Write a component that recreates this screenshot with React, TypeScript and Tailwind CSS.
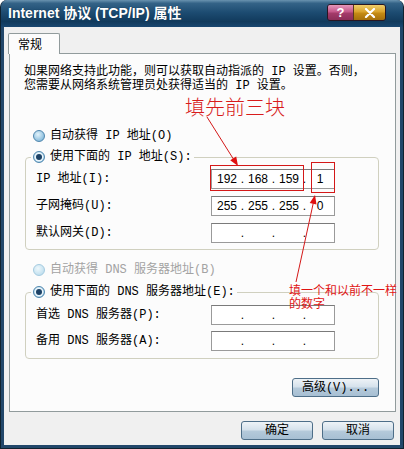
import React, { Fragment } from "react";

function Radio({ checked, disabled }: { checked?: boolean; disabled?: boolean }) {
  return (
    <span
      className={
        disabled
          ? "inline-flex shrink-0 items-center justify-center w-[12px] h-[12px] rounded-full border border-[#a4cbe0] bg-[radial-gradient(circle_at_40%_35%,#eef8fc,#b2d7ea)]"
          : "inline-flex shrink-0 items-center justify-center w-[12px] h-[12px] rounded-full border border-[#4f86ad] bg-[radial-gradient(circle_at_40%_35%,#e2f3fb,#6aaad2)]"
      }
    >
      {checked && (
        <span className="w-[6px] h-[6px] rounded-full bg-[#1d4266] ring-[1.5px] ring-[#eaf5fb]" />
      )}
    </span>
  );
}

function IpBox({ vals }: { vals?: string[] }) {
  return (
    <div className="w-[124px] h-[20px] bg-white border border-[#9a9a9a] border-t-[#7a7a7a] flex items-center pl-[3px] font-[family-name:Liberation_Sans,sans-serif] text-[12px] leading-[14px] text-black">
      {[0, 1, 2, 3].map((i) => (
        <Fragment key={i}>
          {i > 0 && <span className="w-[7px] text-center">.</span>}
          <span className="w-[24px] text-center">{vals ? vals[i] : ""}</span>
        </Fragment>
      ))}
    </div>
  );
}

function Row({ label, vals }: { label: string; vals?: string[] }) {
  return (
    <div className="flex items-center pl-[3px] h-[20px]">
      <span className="w-[175px] leading-[14px]">{label}</span>
      <IpBox vals={vals} />
    </div>
  );
}

function Btn({ children, w }: { children: React.ReactNode; w: string }) {
  return (
    <div
      className={`${w} h-[19px] flex items-center justify-center rounded-[3px] border border-[#4e6e88] bg-[linear-gradient(to_bottom,#eef3f7_0%,#d6e2ec_45%,#b4c9da_55%,#a7bfd3_100%)] text-[12px] leading-[14px] text-black`}
    >
      {children}
    </div>
  );
}

function Legend({ label }: { label: string }) {
  return (
    <legend className="px-[2px] -ml-[2px] h-[14px] leading-[14px]">
      <span className="flex items-center gap-[5px] h-[14px] leading-[14px]">
        <Radio checked />
        <span className="leading-[14px]">{label}</span>
      </span>
    </legend>
  );
}

export default function App() {
  return (
    <div className="relative w-[404px] h-[449px] flex flex-col bg-[#22476a] border-l border-r border-b border-[#10222f] rounded-t-[7px] overflow-hidden font-[family-name:Liberation_Mono,Noto_Sans_CJK_SC,monospace] text-[12px] text-black">
      {/* Title bar */}
      <div className="h-[27px] shrink-0 flex items-start bg-[linear-gradient(to_bottom,#6a93b0_0%,#346387_12%,#1d4c72_45%,#113a5c_80%,#184670_100%)] pl-[7px] pr-[17px]">
        <span className="mt-[5px] text-white font-bold text-[14px] leading-[17px] font-[family-name:Liberation_Sans,Noto_Sans_CJK_SC,sans-serif] [text-shadow:0_0_1px_#0a2a44]">
          Internet 协议 (TCP/IP) 属性
        </span>
        <div className="ml-auto mt-[4px] flex h-[17px] rounded-[3px] border border-[#2a1622] overflow-hidden">
          <div className="w-[25px] flex items-center justify-center bg-[linear-gradient(to_bottom,#e597ba_0%,#c4588a_45%,#a43b6a_55%,#8c2d58_100%)] text-white font-bold text-[13px] leading-[13px] font-[family-name:Liberation_Sans,sans-serif]">
            ?
          </div>
          <div className="w-[32px] flex items-center justify-center bg-[linear-gradient(to_bottom,#f0cd6a_0%,#d9a32c_45%,#c48a14_55%,#a56f0c_100%)] border-l border-[#5a3a20]">
            <svg width="12" height="10" viewBox="0 0 12 10">
              <path d="M2 1 L10 9 M10 1 L2 9" stroke="white" strokeWidth="2.2" strokeLinecap="round" />
            </svg>
          </div>
        </div>
      </div>

      {/* Body */}
      <div className="flex-1 flex flex-col mx-[3px] mb-[3px] bg-[#f0f0f0] pt-[6px]">
        {/* Tab */}
        <div className="relative z-10 ml-[4px] w-[52px] h-[21px] bg-[#fcfcfc] border border-b-0 border-[#919b9c] rounded-t-[2px] pl-[9px] leading-[20px] font-[family-name:Noto_Sans_CJK_SC,sans-serif]">
          常规
        </div>
        {/* Panel */}
        <div className="-mt-[1px] ml-[5px] mr-[4px] border border-[#919b9c] bg-[#fcfcfc] pl-[14px] pr-[16px] pt-[11px] pb-[14px] flex flex-col">
          <p className="leading-[14px]">
            如果网络支持此功能，则可以获取自动指派的 IP 设置。否则，
            <br />
            您需要从网络系统管理员处获得适当的 IP 设置。
          </p>

          <div className="mt-[36px] pl-[9px] h-[14px] flex items-center gap-[5px]">
            <Radio />
            <span className="leading-[14px]">自动获得 IP 地址(O)</span>
          </div>

          <fieldset className="mt-[7px] ml-[1px] border border-[#d0d0bf] rounded-[4px] pl-[7px] pt-[5px] pb-[6px] flex flex-col gap-[7px]">
            <Legend label="使用下面的 IP 地址(S):" />
            <Row label="IP 地址(I):" vals={["192", "168", "159", "1"]} />
            <Row label="子网掩码(U):" vals={["255", "255", "255", "0"]} />
            <Row label="默认网关(D):" />
          </fieldset>

          <div className="mt-[13px] pl-[9px] h-[14px] flex items-center gap-[5px] text-[#a3a3a3]">
            <Radio disabled />
            <span className="leading-[14px]">自动获得 DNS 服务器地址(B)</span>
          </div>

          <fieldset className="mt-[8px] ml-[1px] border border-[#d0d0bf] rounded-[4px] pl-[7px] pt-[6px] pb-[7px] flex flex-col gap-[6px]">
            <Legend label="使用下面的 DNS 服务器地址(E):" />
            <Row label="首选 DNS 服务器(P):" />
            <Row label="备用 DNS 服务器(A):" />
          </fieldset>

          <div className="mt-[19px] self-end">
            <Btn w="w-[87px]">高级(V)...</Btn>
          </div>
        </div>

        <div className="mt-[9px] flex justify-end gap-[9px] pr-[6px]">
          <Btn w="w-[72px]">确定</Btn>
          <Btn w="w-[72px]">取消</Btn>
        </div>
      </div>

      {/* Annotations overlay */}
      <div className="absolute left-[184px] top-[95px] text-[20px] leading-[24px] text-[#d81c1c] font-light font-[family-name:Noto_Sans_CJK_SC,sans-serif] pointer-events-none">
        填先前三块
      </div>
      <div className="absolute left-[288px] top-[283px] w-[112px] text-[12px] leading-[14px] text-[#e01414] font-[family-name:Noto_Sans_CJK_SC,sans-serif] pointer-events-none">
        <div className="h-[13px] leading-[13px]">填一个和以前不一样</div>
        <div className="h-[13px] leading-[13px]">的数字</div>
      </div>
      <div className="absolute left-[209px] top-[165px] w-[94px] h-[26px] border border-[#d41818] pointer-events-none" />
      <div className="absolute left-[310px] top-[162px] w-[24px] h-[31px] border border-[#d41818] pointer-events-none" />
      <svg className="absolute left-0 top-0 pointer-events-none" width="404" height="449" viewBox="0 0 404 449">
        <line x1="206" y1="117" x2="233" y2="160" stroke="#d41818" strokeWidth="1" />
        <polygon points="237,166 229.2,160.3 235.2,156.5" fill="#e01010" />
        <line x1="295" y1="282" x2="312.5" y2="202" stroke="#d41818" strokeWidth="1" />
        <polygon points="314,195 315.5,204.5 308.7,203.1" fill="#e01010" />
      </svg>
    </div>
  );
}
